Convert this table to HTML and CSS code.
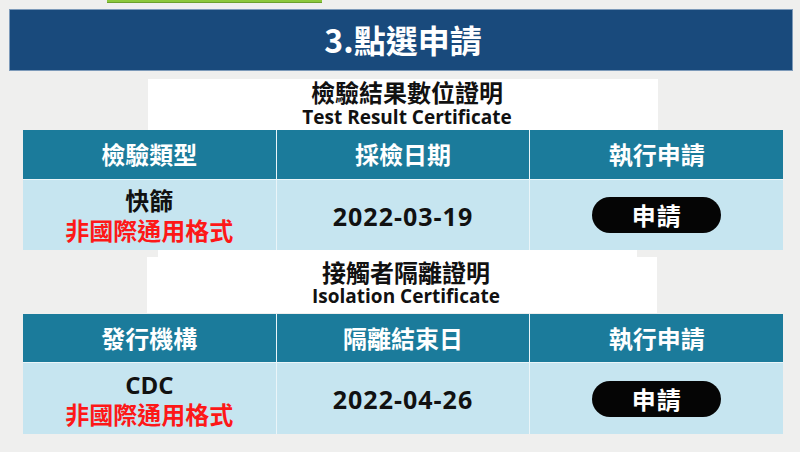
FILE: index.html
```html
<!DOCTYPE html>
<html lang="zh-Hant">
<head>
<meta charset="utf-8">
<link rel="stylesheet" href="styles.css">
</head>
<body>
<div class="page">
  <div class="green-tab"></div>
  <div class="banner">3.點選申請</div>

  <div class="cert-title first">
    <div class="zh">檢驗結果數位證明</div>
    <div class="en">Test Result Certificate</div>
  </div>
  <div class="table">
    <div class="th">檢驗類型</div>
    <div class="th">採檢日期</div>
    <div class="th">執行申請</div>
    <div class="td"><span class="line">快篩</span><span class="line red">非國際通用格式</span></div>
    <div class="td date">2022-03-19</div>
    <div class="td"><span class="btn">申請</span></div>
  </div>

  <div class="tab-strip"></div>
  <div class="cert-title second">
    <div class="zh">接觸者隔離證明</div>
    <div class="en">Isolation Certificate</div>
  </div>
  <div class="table t2">
    <div class="th">發行機構</div>
    <div class="th">隔離結束日</div>
    <div class="th">執行申請</div>
    <div class="td"><span class="line">CDC</span><span class="line red">非國際通用格式</span></div>
    <div class="td date">2022-04-26</div>
    <div class="td"><span class="btn">申請</span></div>
  </div>
</div>
</body>
</html>
```

FILE: styles.css
```css
* { box-sizing: border-box; }
html, body {
  margin: 0;
  padding: 0;
  background: #efefee;
}
body {
  width: 800px;
  height: 452px;
  overflow: hidden;
  font-family: "Open Sans", "Noto Sans CJK TC", "Noto Sans", sans-serif;
  font-weight: 700;
}
.page {
  display: flex;
  flex-direction: column;
}
.green-tab {
  margin-left: 107px;
  width: 215px;
  height: 3px;
  background: #8cc83c;
  border-bottom: 1px solid #6aa02a;
}
.banner {
  margin: 6px 7px 0 9px;
  height: 62px;
  background: #194a7c;
  border: 1px solid #7d9ab9;
  color: #ffffff;
  font-family: "Noto Sans CJK TC", sans-serif;
  font-size: 32px;
  font-weight: 700;
  display: flex;
  align-items: center;
  justify-content: center;
  padding-left: 4px;
  padding-bottom: 2px;
}
.cert-title {
  width: 510px;
  margin-left: 148px;
  background: #ffffff;
  color: #111111;
  text-align: center;
  display: flex;
  flex-direction: column;
}
.cert-title.first {
  margin-top: 8px;
  height: 51px;
}
.cert-title.second {
  margin-left: 147px;
  height: 56px;
  padding-top: 1px;
}
.tab-strip {
  width: 479px;
  height: 7px;
  margin-left: 158px;
  background: #ffffff;
}
.zh {
  font-family: "Noto Sans CJK TC", sans-serif;
  font-size: 24px;
  line-height: 25px;
  padding-left: 8px;
}
.en {
  font-size: 19px;
  line-height: 22px;
  padding-left: 8px;
  margin-top: 2px;
}
.second .zh { line-height: 27px; }
.second .en { margin-top: 0; }
.table {
  margin-left: 23px;
  width: 760px;
  display: grid;
  grid-template-columns: 1fr 1fr 1fr;
  grid-template-rows: 49px 70px;
  gap: 1px;
  background: #eaf5f9;
}
.table.t2 {
  margin-top: 1px;
  grid-template-rows: 48px 71px;
}
.th {
  background: #1b7b9b;
  color: #ffffff;
  font-family: "Noto Sans CJK TC", sans-serif;
  font-size: 24px;
  display: flex;
  align-items: center;
  justify-content: center;
  padding-bottom: 2px;
}
.td {
  background: #c6e5f0;
  color: #111111;
  font-size: 24px;
  display: flex;
  flex-direction: column;
  align-items: center;
  justify-content: center;
}
.line {
  line-height: 29px;
}
.red {
  color: #fd1818;
  font-family: "Noto Sans CJK TC", sans-serif;
}
.date {
  font-size: 25px;
  letter-spacing: 1px;
  padding-top: 1px;
}
.btn {
  width: 129px;
  height: 36px;
  border-radius: 18px;
  background: #050505;
  color: #ffffff;
  font-family: "Noto Sans CJK TC", sans-serif;
  font-size: 24px;
  line-height: 36px;
  text-align: center;
  letter-spacing: 1px;
}
```
